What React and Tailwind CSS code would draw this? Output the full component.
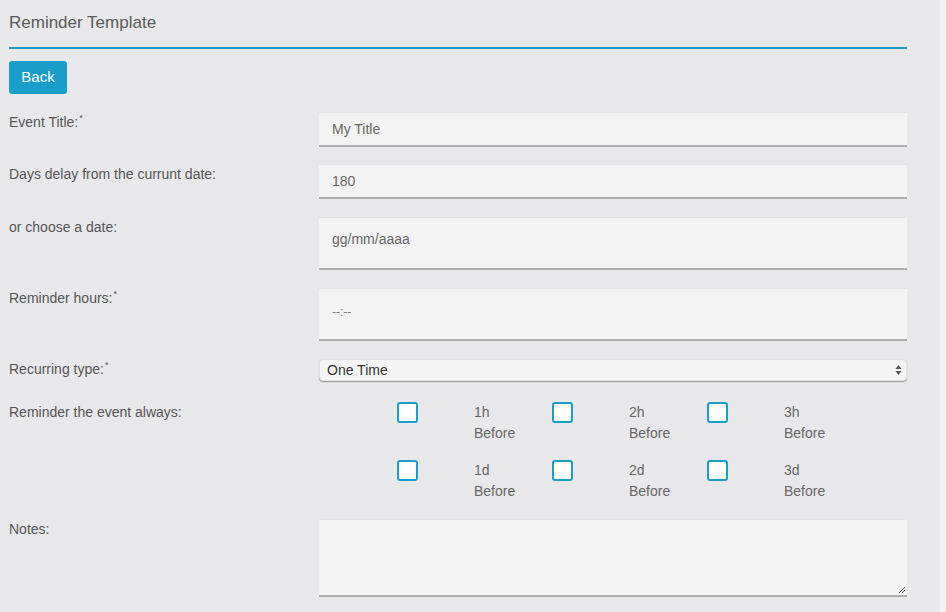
const font = { fontFamily: '"Helvetica Neue", "Liberation Sans", Arial, sans-serif' };

const checks = [
  ["1h", "2h", "3h"],
  ["1d", "2d", "3d"],
];

function Label({ children, required }) {
  return (
    <div className="w-[310px] shrink-0 text-[14px] leading-5 text-[#555] font-light">
      {children}
      {required && <span className="ml-px text-[9px] leading-none relative top-[-6px]">*</span>}
    </div>
  );
}

function TextBox({ value, tall }) {
  return (
    <div
      className={`flex-1 bg-[#f3f3f3] border-t border-[#e3e3e3] border-b-2 border-b-[#aeaeae] pl-[13px] text-[14px] text-[#666] ${
        tall ? "h-[53px] pt-[11px]" : "h-[35px] pt-[6px]"
      }`}
    >
      {value}
    </div>
  );
}

export default function App() {
  return (
    <div className="w-[946px] h-[612px] flex bg-[#f2f2f2]" style={font}>
      <div className="w-[940px] h-full bg-[#e8e8ea] pl-[9px] pr-[33px]">
        <div className="border-b-2 border-[#1d9dc9] pt-[11px] pb-[12px]">
          <h1 className="text-[17px] leading-6 text-[#5a5a5a] font-light">Reminder Template</h1>
        </div>
        <button className="mt-[12px] h-[33px] w-[58px] rounded-[3px] bg-[#1a9ec9] text-white text-[15px] font-light">
          Back
        </button>

        <div className="mt-[18px] flex items-start">
          <Label required>Event Title:</Label>
          <TextBox value="My Title" />
        </div>

        <div className="mt-[17px] flex items-start">
          <Label>Days delay from the currunt date:</Label>
          <TextBox value="180" />
        </div>

        <div className="mt-[18px] flex items-start">
          <Label>or choose a date:</Label>
          <TextBox value="gg/mm/aaaa" tall />
        </div>

        <div className="mt-[18px] flex items-start">
          <Label required>Reminder hours:</Label>
          <div className="flex-1 h-[53px] bg-[#f3f3f3] border-t border-[#e3e3e3] border-b-2 border-b-[#aeaeae] pl-[13px] pt-[14px] text-[12px] text-[#777]">
            --:--
          </div>
        </div>

        <div className="mt-[18px] flex items-start">
          <Label required>Recurring type:</Label>
          <div className="flex-1 h-[22px] rounded-[4px] bg-[#f4f4f4] shadow-[0_1px_1px_rgba(0,0,0,0.35)] border border-[#e2e2e2] flex items-center justify-between pl-[7px] pr-[4px] text-[14px] text-[#333]">
            <span className="font-light">One Time</span>
            <svg width="7" height="12" viewBox="0 0 7 12">
              <path d="M3.5 1 L6.5 5 H0.5 Z" fill="#555" />
              <path d="M3.5 11 L6.5 7 H0.5 Z" fill="#555" />
            </svg>
          </div>
        </div>

        <div className="mt-[21px] flex items-start">
          <Label>Reminder the event always:</Label>
          <div className="flex-1 pl-[78px] flex flex-col gap-[16px]">
            {checks.map((row, i) => (
              <div key={i} className="flex">
                {row.map((c) => (
                  <div key={c} className="w-[155px] flex">
                    <div className="w-[21px] h-[21px] shrink-0 rounded-[3px] border-2 border-[#1a9ec9] bg-white" />
                    <div className="ml-[56px] text-[14px] leading-[21px] text-[#666] font-light">
                      <div>{c}</div>
                      <div>Before</div>
                    </div>
                  </div>
                ))}
              </div>
            ))}
          </div>
        </div>

        <div className="mt-[17px] flex items-start">
          <Label>Notes:</Label>
          <div className="relative flex-1 h-[78px] bg-[#f3f3f3] border-t border-[#e3e3e3] border-b-2 border-b-[#aeaeae]">
            <svg className="absolute right-[1px] bottom-[1px]" width="8" height="8" viewBox="0 0 8 8">
              <path d="M7 1 L1 7 M7 4 L4 7" stroke="#555" strokeWidth="1" />
            </svg>
          </div>
        </div>
      </div>
    </div>
  );
}
